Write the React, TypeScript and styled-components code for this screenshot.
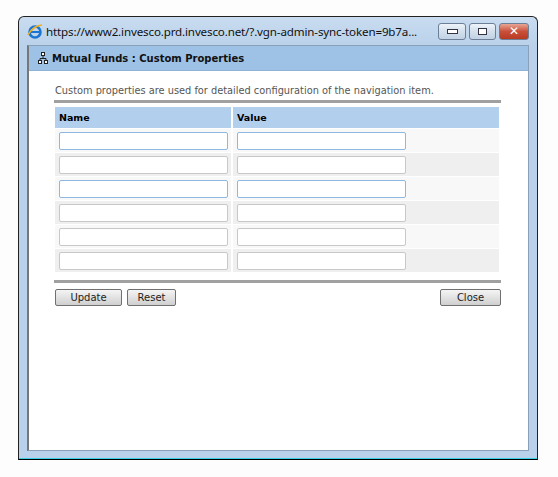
import React from "react";
import styled, { createGlobalStyle } from "styled-components";

const G = createGlobalStyle`
  body { margin:0; background:#fdfdfd; font-family: Tahoma, "DejaVu Sans", sans-serif; }
`;
const Page = styled.div`width:558px;height:477px;padding:16px 0 0 18px;box-sizing:border-box;`;
const Win = styled.div`
  width:520px;height:444px;box-sizing:border-box;border:1px solid #222;border-radius:6px 6px 0 0;
  background:linear-gradient(#c9dcf0,#b9d1ea 30px,#b9d1ea);display:flex;flex-direction:column;
  padding:0 8px 8px 8px;border-bottom-color:#000;box-shadow:inset 0 -1px 0 #3ad0e8;
`;
const TitleBar = styled.div`height:28px;display:flex;align-items:center;gap:3px;`;
const Url = styled.div`flex:1;font-family:"Noto Sans","DejaVu Sans",sans-serif;font-size:11.6px;color:#111;white-space:nowrap;overflow:hidden;letter-spacing:-0.15px;`;
const Ctl = styled.div<{ $w: number; $red?: boolean }>`
  width:${p=>p.$w}px;height:17px;border:1px solid #6d7f96;border-radius:3px;box-sizing:border-box;flex:none;
  background:${p=>p.$red?"linear-gradient(#e9a595,#c8503a 50%,#b83a22)":"linear-gradient(#eef3f9,#d3dfec 50%,#c2d2e4)"};
  display:flex;align-items:center;justify-content:center;color:#fff;font-weight:bold;font-size:12px;font-family:"DejaVu Sans",sans-serif;
`;
const Body = styled.div`flex:1;background:#fff;border:1px solid #8aa0b8;border-left:2px solid #777;display:flex;flex-direction:column;`;
const Head = styled.div`height:24px;background:#9ec1e6;display:flex;align-items:center;gap:4px;padding-left:9px;font-size:10px;font-weight:bold;color:#111;font-family:"DejaVu Sans",sans-serif;border-bottom:1px solid #8fb2d8;`;
const Content = styled.div`padding:14px 27px 0 25px;`;
const Desc = styled.div`font-size:9.8px;color:#555;font-family:"DejaVu Sans",sans-serif;padding-left:1px;`;
const Rule = styled.div`height:3px;background:#a0a0a0;margin:4px 0 4px;`;
const Table = styled.div`display:grid;grid-template-columns:178px 1fr;margin-left:1px;`;
const Th = styled.div`height:21px;background:#b3cfee;font-size:9.5px;font-weight:bold;font-family:"DejaVu Sans",sans-serif;display:flex;align-items:center;padding-left:4px;border-right:2px solid #fff;`;
const Td = styled.div<{ $alt: boolean }>`height:24px;background:${p=>p.$alt?"#efefef":"#f8f8f8"};display:flex;align-items:center;padding-left:4px;border-right:2px solid #fff;border-top:1px solid #fff;box-sizing:border-box;`;
const Input = styled.div<{ $focus?: boolean }>`width:169px;height:18px;box-sizing:border-box;background:#fff;border:1px solid ${p=>p.$focus?"#8fb8e0":"#c8c8c8"};border-radius:2px;`;
const Btns = styled.div`display:flex;gap:5px;margin-top:6px;margin-left:1px;`;
const Btn = styled.button<{ $w: number }>`
  width:${p=>p.$w}px;height:17px;border:1px solid #707070;border-radius:2px;padding:0;
  background:linear-gradient(#f4f4f4,#e2e2e2 50%,#cfcfcf);font-size:10px;font-family:"DejaVu Sans",sans-serif;color:#222;
`;
const Spacer = styled.div`flex:1;`;

export default function App() {
  const rows = [true,false,true,false,false,false];
  return (
    <Page><G/>
      <Win>
        <TitleBar>
          <svg width="16" height="16" viewBox="0 0 16 16"><circle cx="8" cy="9" r="5.5" fill="none" stroke="#1b74d1" strokeWidth="2.6"/><path d="M3.5 9h9" stroke="#1b74d1" strokeWidth="2"/><path d="M1 12c3-6 9-10 14-10" fill="none" stroke="#f2b01e" strokeWidth="1.6"/></svg>
          <Url>https://www2.invesco.prd.invesco.net/?.vgn-admin-sync-token=9b7a...</Url>
          <Ctl $w={28}><span style={{width:9,height:3,border:"1px solid #334",background:"#fff"}}/></Ctl>
          <Ctl $w={27}><span style={{width:7,height:5,border:"1px solid #334",background:"#fff"}}/></Ctl>
          <Ctl $w={30} $red>✕</Ctl>
        </TitleBar>
        <Body>
          <Head>
            <svg width="10" height="12" viewBox="0 0 10 12"><rect x="3.5" y="0.5" width="3" height="3" fill="#fff" stroke="#222"/><path d="M5 3.5v3M2 6.5h6M2 6.5v2M8 6.5v2" stroke="#222" fill="none"/><rect x="0.5" y="8.5" width="3" height="3" fill="#fff" stroke="#222"/><rect x="6.5" y="8.5" width="3" height="3" fill="#fff" stroke="#222"/></svg>
            Mutual Funds : Custom Properties
          </Head>
          <Content>
            <Desc>Custom properties are used for detailed configuration of the navigation item.</Desc>
            <Rule/>
            <Table>
              <Th>Name</Th><Th>Value</Th>
              {rows.map((f,i)=>(
                <React.Fragment key={i}>
                  <Td $alt={i%2===1}><Input $focus={f}/></Td>
                  <Td $alt={i%2===1}><Input $focus={f}/></Td>
                </React.Fragment>
              ))}
            </Table>
            <Rule style={{marginTop:8}}/>
            <Btns>
              <Btn $w={67}>Update</Btn>
              <Btn $w={49}>Reset</Btn>
              <Spacer/>
              <Btn $w={61}>Close</Btn>
            </Btns>
          </Content>
        </Body>
      </Win>
    </Page>
  );
}
